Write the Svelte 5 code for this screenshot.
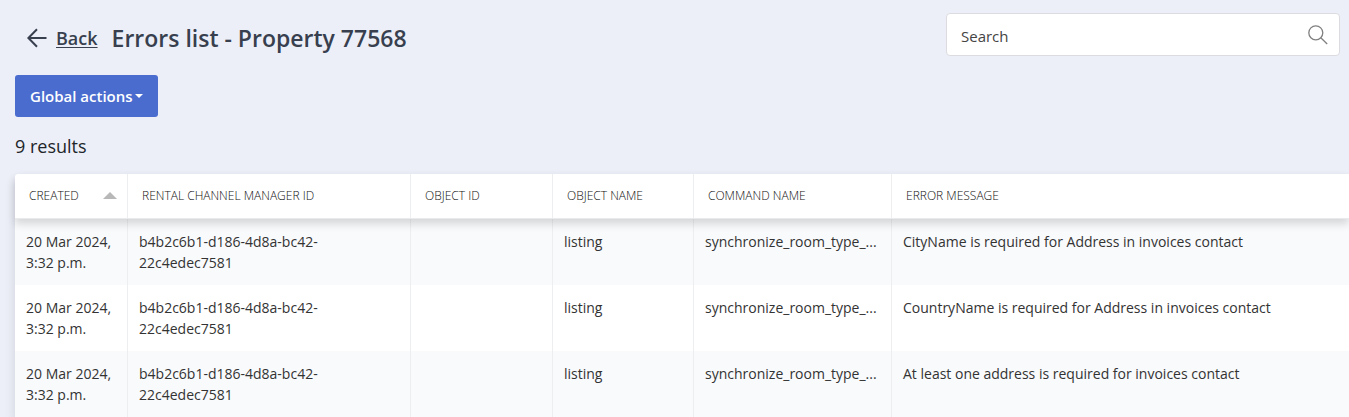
<script lang="ts">
  interface ErrorRow {
    created: string;
    managerId: string;
    objectId: string;
    objectName: string;
    command: string;
    message: string;
  }

  const columns = [
    { label: 'Created', name: 'created', sorted: true },
    { label: 'Rental channel manager ID', name: 'manager' },
    { label: 'Object ID', name: 'object-id' },
    { label: 'Object name', name: 'object-name' },
    { label: 'Command name', name: 'command' },
    { label: 'Error message', name: 'message' },
  ];

  const messages = [
    'CityName is required for Address in invoices contact',
    'CountryName is required for Address in invoices contact',
    'At least one address is required for invoices contact',
  ];

  const rows: ErrorRow[] = messages.map((message) => ({
    created: '20 Mar 2024, 3:32 p.m.',
    managerId: 'b4b2c6b1-d186-4d8a-bc42-22c4edec7581',
    objectId: '',
    objectName: 'listing',
    command: 'synchronize_room_type_...',
    message,
  }));

  let query = $state('');
</script>

<main class="page">
  <header class="header">
    <div class="heading">
      <a class="back" href="#back">
        <svg class="back__icon" viewBox="0 0 20 20" aria-hidden="true">
          <path d="M19.5 10H1.5M10 1.2L1.4 10l8.6 8.8" />
        </svg>
        <span class="back__label">Back</span>
      </a>
      <h1 class="title">Errors list - Property 77568</h1>
    </div>
    <form class="search" role="search" onsubmit={(e) => e.preventDefault()}>
      <input
        class="search__field"
        type="text"
        placeholder="Search"
        aria-label="Search"
        bind:value={query}
      />
      <button class="search__button" type="submit" aria-label="Submit search">
        <svg class="search__icon" viewBox="0 0 20 20" aria-hidden="true">
          <circle cx="7.8" cy="7.8" r="7" />
          <path d="M12.8 12.8l6.4 6.2" />
        </svg>
      </button>
    </form>
  </header>

  <button class="actions" type="button" aria-haspopup="true">
    Global actions
    <span class="actions__caret"></span>
  </button>

  <p class="count">9 results</p>

  <table class="errors">
    <colgroup>
      {#each columns as column (column.name)}
        <col class="col-{column.name}" />
      {/each}
    </colgroup>
    <thead>
      <tr>
        {#each columns as column (column.name)}
          <th scope="col" aria-sort={column.sorted ? 'ascending' : undefined}>
            <div class="label">
              {column.label}
              {#if column.sorted}<span class="label__sort"></span>{/if}
            </div>
          </th>
        {/each}
      </tr>
    </thead>
    <tbody>
      {#each rows as row (row.message)}
        <tr>
          <td>{row.created}</td>
          <td>{row.managerId}</td>
          <td>{row.objectId}</td>
          <td>{row.objectName}</td>
          <td class="nowrap">{row.command}</td>
          <td>{row.message}</td>
        </tr>
      {/each}
    </tbody>
  </table>
</main>

<style>
  :global(body) {
    background: #eceff8;
  }

  .page {
    padding: 13px 0 0 15px;
    overflow: hidden;
    color: #333;
    font-family: 'Segoe UI', 'Open Sans', 'Noto Sans', sans-serif;
    font-size: 14px;
  }

  .header {
    display: flex;
    align-items: center;
    justify-content: space-between;
    padding: 0 9px 0 12px;
    color: #383f4e;
  }

  .heading {
    display: flex;
    align-items: center;
    padding-top: 7px;
  }

  .back {
    display: flex;
    align-items: center;
    gap: 9px;
    color: inherit;
    text-decoration: none;
  }

  .back__icon {
    width: 20px;
    height: 20px;
    fill: none;
    stroke: currentColor;
    stroke-width: 2;
  }

  .back__label {
    font-size: 18px;
    font-weight: 600;
    line-height: 24px;
    text-decoration: underline;
    text-underline-offset: 2px;
  }

  .title {
    margin: 0 0 0 14px;
    font-size: 23px;
    font-weight: 600;
    line-height: 32px;
  }

  .search {
    display: flex;
    box-sizing: border-box;
    width: 394px;
    height: 43px;
    background: #fff;
    border: 1px solid #dcdce0;
    border-radius: 4px;
  }

  .search__field {
    flex: 1;
    min-width: 0;
    padding: 2px 0 0 14px;
    background: none;
    border: 0;
    outline: none;
    color: #444;
    font: inherit;
    font-size: 15px;
  }

  .search__field::placeholder {
    color: #444;
    opacity: 1;
  }

  .search__button {
    display: flex;
    align-items: center;
    padding: 0 11px;
    background: none;
    border: 0;
    cursor: pointer;
  }

  .search__icon {
    width: 20px;
    height: 20px;
    fill: none;
    stroke: #808080;
    stroke-width: 1.3;
  }

  .actions {
    display: flex;
    align-items: center;
    gap: 2px;
    height: 42px;
    margin-top: 19px;
    padding: 0 15px;
    background: #4a6ccf;
    border: 0;
    border-radius: 3px;
    color: #fff;
    font: inherit;
    font-size: 15px;
    font-weight: 600;
    cursor: pointer;
  }

  .actions__caret {
    border: 4px solid transparent;
    border-top-color: currentColor;
    border-bottom: 0;
  }

  .count {
    margin: 17px 0 15px;
    color: #212529;
    font-size: 18px;
    line-height: 25px;
  }

  .errors {
    width: 100%;
    border-spacing: 0;
    table-layout: fixed;
    background: #fff;
    border-radius: 4px 0 0;
    box-shadow: 0 6px 12px rgba(0, 0, 0, 0.12);
  }

  .col-created {
    width: 113px;
  }

  .col-manager {
    width: 283px;
  }

  .col-object-id {
    width: 142px;
  }

  .col-object-name {
    width: 141px;
  }

  .col-command {
    width: 198px;
  }

  thead {
    position: relative;
    box-shadow: 0 5px 8px rgba(0, 0, 0, 0.14);
  }

  th {
    height: 42px;
    padding: 0 10px 2px 14px;
    background: #fff;
    border-right: 1px solid #eceef0;
    border-bottom: 1px solid #e8eaed;
    color: #111;
    font-size: 12px;
    font-weight: 300;
    text-align: left;
    text-transform: uppercase;
  }

  th:first-child {
    border-top-left-radius: 4px;
  }

  .label {
    display: flex;
    align-items: center;
    justify-content: space-between;
  }

  .label__sort {
    border: 7px solid transparent;
    border-top: 0;
    border-bottom-color: #b8b8b8;
  }

  td {
    height: 42px;
    padding: 12px 11px;
    border-right: 1px solid #eceef0;
    line-height: 21px;
    vertical-align: top;
  }

  th:last-child,
  td:last-child {
    border-right: 0;
  }

  tbody tr:nth-child(odd) {
    background: #f9fafc;
  }

  .nowrap {
    overflow: hidden;
    text-overflow: ellipsis;
    white-space: nowrap;
  }
</style>
